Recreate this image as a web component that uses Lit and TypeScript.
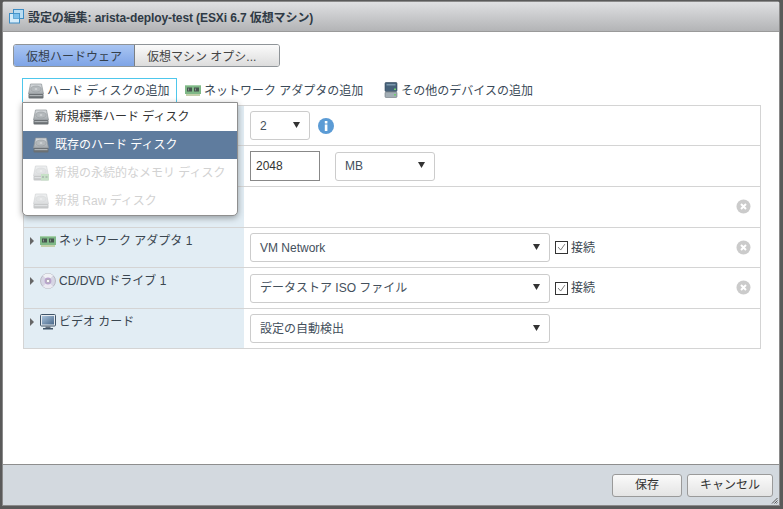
import { LitElement, html, css, svg } from "lit";
import { customElement } from "lit/decorators.js";

const disk = (mode: "" | "dim" | "mem" = "") => html`<svg class="ic" width="16" height="16" viewBox="0 0 16 16" style="opacity:${mode ? 0.38 : 1}">
  <defs><linearGradient id="dg" x1="0" y1="0" x2="0" y2="1"><stop offset="0" stop-color="#d7dbde"/><stop offset="1" stop-color="#a3a8ac"/></linearGradient></defs>
  <path d="M2.5 1h11l2 10H.5z" fill="url(#dg)" stroke="#8d9296" stroke-width=".7"/>
  <ellipse cx="8" cy="6" rx="5.2" ry="3" fill="#b4b9bc" stroke="#989da1" stroke-width=".6"/>
  <ellipse cx="8" cy="6" rx="1.4" ry=".8" fill="#d8dbdd"/>
  <rect x=".5" y="11" width="15" height="4.5" rx="1" fill="#6b7074"/>
  <rect x="1.5" y="12" width="13" height="1.2" fill="#aeb3b6"/>
  ${mode === "mem" ? svg`<rect x="8" y="9" width="8" height="6.5" fill="#6fb36f"/><rect x="9" y="11" width="2" height="2" fill="#2f5d3c"/><rect x="12.5" y="11" width="2" height="2" fill="#2f5d3c"/>` : ""}
</svg>`;

const nic = html`<svg class="ic nic" width="16" height="11" viewBox="0 0 16 11">
  <rect x="0" y="0" width="16" height="9" fill="#7fb887"/>
  <rect x="0" y="0" width="16" height="1" fill="#a6d0aa"/>
  <rect x="2" y="2.5" width="5" height="4" fill="#47564f"/>
  <rect x="9" y="2.5" width="5" height="4" fill="#47564f"/>
  <rect x="3" y="3.5" width="1" height="2" fill="#8a9a90"/>
  <rect x="10" y="3.5" width="1" height="2" fill="#8a9a90"/>
  <rect x="1" y="9" width="14" height="2" fill="#c2cfa9"/>
</svg>`;

const other = html`<svg class="ic" width="14" height="16" viewBox="0 0 14 16">
  <rect x="1" y="0.5" width="12" height="9" rx="1" fill="#47627a" stroke="#31465a" stroke-width=".6"/>
  <rect x="2.5" y="2" width="9" height="1.5" fill="#7d98ac"/>
  <rect x="10" y="6.5" width="2" height="1.5" fill="#6ed06e"/>
  <rect x="1" y="10" width="12" height="5.5" rx="1" fill="#a3aeb5" stroke="#6d777d" stroke-width=".6"/>
  <rect x="10" y="12" width="2" height="1.5" fill="#6ed06e"/>
</svg>`;

const dvd = html`<svg class="ic" width="16" height="16" viewBox="0 0 16 16">
  <circle cx="8" cy="8" r="7.5" fill="#d6d5e4" stroke="#a9a9b2" stroke-width=".7"/>
  <path d="M8 8 L3 2.5 A7.5 7.5 0 0 1 13 2.5Z" fill="#f0f1f5"/>
  <path d="M8 8 L3 13.5 A7.5 7.5 0 0 0 13 13.5Z" fill="#eceaf2"/>
  <circle cx="8" cy="8" r="3.4" fill="#b9a3cc"/>
  <circle cx="8" cy="8" r="1.6" fill="#fff" stroke="#999" stroke-width=".5"/>
</svg>`;

const monitor = html`<svg class="ic" width="16" height="16" viewBox="0 0 16 16">
  <defs><linearGradient id="mg" x1="0" y1="0" x2="1" y2="1"><stop offset="0" stop-color="#a9c3dc"/><stop offset="1" stop-color="#48688a"/></linearGradient></defs>
  <rect x="0.5" y="0.5" width="15" height="11.5" rx="1" fill="#e6ebf0" stroke="#3f5468"/>
  <rect x="2" y="2" width="12" height="8.5" fill="url(#mg)"/>
  <rect x="5.5" y="12.5" width="5" height="1.5" fill="#64707c"/>
  <rect x="3" y="14" width="10" height="1.5" fill="#3f5468"/>
</svg>`;

const vmIcon = html`<svg width="15" height="15" viewBox="0 0 15 15">
  <rect x="4.5" y="0.5" width="10" height="9" fill="#b9dcf2" stroke="#3d8cc4"/>
  <rect x="0.5" y="4.5" width="10" height="9.5" fill="#d5ecfa" stroke="#3d8cc4"/>
  <rect x="4.5" y="4.5" width="6" height="5" fill="#7cc0ec" stroke="#3d8cc4" stroke-width=".6"/>
</svg>`;

const closeIcon = html`<svg class="x" width="15" height="15" viewBox="0 0 15 15">
  <circle cx="7.5" cy="7.5" r="7" fill="#cbcbcb"/>
  <path d="M5 5l5 5M10 5l-5 5" stroke="#fff" stroke-width="2"/>
</svg>`;

const arrow = html`<svg width="7" height="6" viewBox="0 0 7 6"><path d="M0 0h7L3.5 6z" fill="#333"/></svg>`;
const tw = html`<svg class="tw" width="4" height="8" viewBox="0 0 4 8"><path d="M0 0l4 4-4 4z" fill="#666"/></svg>`;
const box = html`<svg class="box" viewBox="0 0 13 13"><path d="M2.5 6l3 3.5 5-7" fill="none" stroke="#666" stroke-width="1"/></svg>`;

@customElement("app-root")
export class AppRoot extends LitElement {
  static styles = css`
    :host { display: block; width: 783px; height: 509px; background: #5a5a5a;
      font-family: "Liberation Sans", "Noto Sans CJK JP", sans-serif; font-size: 12px; color: #333; overflow: hidden; }
    .win { box-sizing: border-box; width: 778px; height: 505px; margin: 1px 0 0 2px; display: flex; flex-direction: column;
      background: #fff; position: relative; border: 1px solid #8a8a8a; border-radius: 3px 3px 0 0; }
    .title { height: 30px; flex: none; box-sizing: border-box; display: flex; align-items: center; gap: 4px; padding: 0 0 0 6px;
      background: linear-gradient(#dfe0e2, #b3b4b6); border-bottom: 1px solid #9a9a9a; font-weight: 700; color: #2f3a45; font-size: 12px; letter-spacing: -0.1px; }
    .body { flex: 1; padding: 12px 0 0 10px; min-height: 0; }
    .tabs { display: flex; width: fit-content; height: 23px; box-sizing: border-box; border: 1px solid #8f9498; border-radius: 3px; overflow: hidden; }
    .tab { display: flex; align-items: center; justify-content: center; box-sizing: border-box; height: 100%; color: #444; }
    .tab.on { width: 121px; background: linear-gradient(#a9c5f2, #7ea4e6); border-right: 1px solid #7a7f84; color: #34404c; }
    .tab.off { width: 144px; justify-content: flex-start; padding-left: 12px; background: linear-gradient(#fbfbfb, #dcdcdc); }
    .tools { display: flex; align-items: center; height: 24px; margin: 11px 0 0 9px; }
    .tool { display: flex; align-items: center; gap: 3px; height: 24px; box-sizing: border-box; white-space: nowrap; color: #3a4a58; }
    .tool.first { width: 155px; padding-left: 5px; border: 1px solid #4ec7ec; border-bottom: none; }
    .tool.second { margin-left: 8px; }
    .tool.third { margin-left: 21px; }
    .ic { flex: none; }
    .tbl { margin: 3px 0 0 10px; box-sizing: border-box; border: 1px solid #d4d4d4; width: 738px; }
    .row { display: flex; box-sizing: border-box; border-bottom: 1px solid #d4d4d4; }
    .row:last-child { border-bottom: none; }
    .lab { width: 220px; flex: none; background: #e2edf4; display: flex; align-items: flex-start; gap: 3px; padding: 5px 0 0 6px; box-sizing: border-box; color: #3a4650; line-height: 16px; }
    .lab .ic { margin-left: 3px; }
    .lab .nic { margin-top: 3px; }
    .tw { margin-top: 4px; flex: none; }
    .val { flex: 1; position: relative; display: flex; align-items: center; padding-left: 6px; }
    .sel { box-sizing: border-box; height: 29px; border: 1px solid #ccc; border-radius: 3px; display: flex; align-items: center; justify-content: space-between; padding: 0 9px 0 9px; color: #44505c; background: #fff; }
    .sel svg { margin-top: -2px; }
    .w300 { width: 300px; }
    .r1 { height: 40px; } .r2 { height: 41px; } .r3 { height: 41px; } .r4 { height: 40px; } .r5 { height: 41px; } .r6 { height: 39px; }
    .inp { box-sizing: border-box; width: 70px; height: 30px; border: 1px solid #888; padding: 0 5px; display: flex; align-items: center; color: #333; }
    .mb { width: 100px; margin-left: 15px; }
    .two { width: 60px; }
    .info { margin-left: 8px; }
    .chk { display: flex; align-items: center; margin-left: 5px; gap: 3px; color: #3a4650; }
    .box { box-sizing: border-box; width: 13px; height: 13px; border: 1px solid #333; background: #fff; display: block; }
    .up { margin-bottom: 3px; }
    .up1 { margin-bottom: 2px; }
    .x { position: absolute; right: 9px; top: 50%; margin-top: -8px; }
    .foot { height: 41px; flex: none; box-sizing: border-box; background: #d3d9df; border-top: 1px solid #8e8e8e; display: flex; justify-content: flex-end; align-items: center; gap: 5px; padding: 0 6px 0 0; position: relative; }
    .btn { box-sizing: border-box; height: 23px; border: 1px solid #9a9a9a; border-radius: 3px; background: linear-gradient(#fafafa, #e4e4e4); display: flex; align-items: center; justify-content: center; color: #333; }
    .save { width: 70px; } .cancel { width: 86px; }
    .grip { position: absolute; right: 1px; bottom: 1px; }
    .menu { position: absolute; left: 19px; top: 100px; width: 216px; height: 114px; box-sizing: border-box; background: #fff; border: 1px solid #8f8f8f; border-radius: 0 0 5px 5px; box-shadow: 0 2px 6px rgba(0,0,0,.35); z-index: 5; }
    .mi { height: 28px; box-sizing: border-box; padding: 0 0 1px 10px; display: flex; align-items: center; gap: 6px; color: #333; white-space: nowrap; }
    .mi.sel2 { background: #5f7c9e; color: #fff; }
    .mi.dis { color: #d2d2d2; }
  `;

  render() {
    return html`<div class="win">
      <div class="title">${vmIcon}<span>設定の編集: arista-deploy-test (ESXi 6.7 仮想マシン)</span></div>
      <div class="body">
        <div class="tabs"><div class="tab on">仮想ハードウェア</div><div class="tab off">仮想マシン オプシ...</div></div>
        <div class="tools">
          <div class="tool first">${disk()}<span class="up1">ハード ディスクの追加</span></div>
          <div class="tool second">${nic}<span class="up1">ネットワーク アダプタの追加</span></div>
          <div class="tool third">${other}<span class="up1">その他のデバイスの追加</span></div>
        </div>
        <div class="tbl">
          <div class="row r1"><div class="lab"></div><div class="val">
            <div class="sel two"><span>2</span>${arrow}</div>
            <svg class="info" width="16" height="16" viewBox="0 0 16 16"><circle cx="8" cy="8" r="8" fill="#5b9bd5"/><rect x="6.8" y="6.5" width="2.6" height="6.5" fill="#fff"/><rect x="6.8" y="3" width="2.6" height="2.5" fill="#fff"/></svg>
          </div></div>
          <div class="row r2"><div class="lab"></div><div class="val">
            <div class="inp">2048</div>
            <div class="sel mb"><span>MB</span>${arrow}</div>
          </div></div>
          <div class="row r3"><div class="lab"></div><div class="val">${closeIcon}</div></div>
          <div class="row r4"><div class="lab">${tw}${nic}<span>ネットワーク アダプタ 1</span></div><div class="val">
            <div class="sel w300"><span>VM Network</span>${arrow}</div>
            <div class="chk">${box}<span class="up">接続</span></div>${closeIcon}
          </div></div>
          <div class="row r5"><div class="lab">${tw}${dvd}<span>CD/DVD ドライブ 1</span></div><div class="val">
            <div class="sel w300"><span class="up">データストア ISO ファイル</span>${arrow}</div>
            <div class="chk">${box}<span class="up">接続</span></div>${closeIcon}
          </div></div>
          <div class="row r6"><div class="lab">${tw}${monitor}<span>ビデオ カード</span></div><div class="val">
            <div class="sel w300"><span class="up">設定の自動検出</span>${arrow}</div>
          </div></div>
        </div>
      </div>
      <div class="foot">
        <div class="btn save"><span class="up">保存</span></div>
        <div class="btn cancel"><span class="up">キャンセル</span></div>
        <svg class="grip" width="7" height="7" viewBox="0 0 7 7"><path d="M6.5 1L1 6.5M6.5 3.5L3.5 6.5M6.5 5.5L5.5 6.5" stroke="#555"/></svg>
      </div>
      <div class="menu">
        <div class="mi">${disk()}<span class="up1">新規標準ハード ディスク</span></div>
        <div class="mi sel2">${disk()}<span class="up1">既存のハード ディスク</span></div>
        <div class="mi dis">${disk("mem")}<span class="up1">新規の永続的なメモリ ディスク</span></div>
        <div class="mi dis">${disk("dim")}<span class="up1">新規 Raw ディスク</span></div>
      </div>
    </div>`;
  }
}
